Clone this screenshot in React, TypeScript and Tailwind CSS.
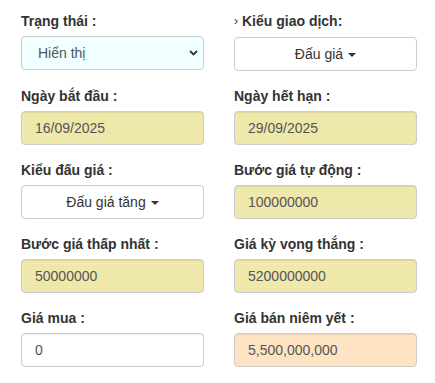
import React from "react";

const font = { fontFamily: '"Liberation Sans", Arial, sans-serif' };

function Label({ children }: { children: React.ReactNode }) {
  return (
    <label className="block mb-[5px] text-[14px] leading-5 font-bold text-[#333]">{children}</label>
  );
}

function Input({ value, bg }: { value: string; bg: string }) {
  return (
    <div
      className={`h-[34px] border border-[#ccc] rounded-[4px] pl-[13px] flex items-center text-[14px] text-[#555] shadow-[inset_0_1px_1px_rgba(0,0,0,0.075)] ${bg}`}
    >
      {value}
    </div>
  );
}

function Dropdown({ value }: { value: string }) {
  return (
    <div className="h-[34px] border border-[#ccc] rounded-[4px] bg-white flex items-center justify-center text-[14px] text-[#333]">
      <span>{value}</span>
      <span className="ml-[5px] inline-block w-0 h-0 border-t-[4px] border-t-[#333] border-x-[4px] border-x-transparent translate-y-[1px]" />
    </div>
  );
}

function Cell({ children }: { children: React.ReactNode }) {
  return <div className="px-[15px] mb-[15px]">{children}</div>;
}

export default function App() {
  return (
    <div style={font} className="bg-white w-[435px] h-[383px] pt-[11px] pl-[6px]">
      <div className="grid grid-cols-[213px_213px]">
        <Cell>
          <Label>Trạng thái :</Label>
          <div className="h-[34px] border border-[#ccc] rounded-[4px] bg-[#f0ffff] pl-[16px] pr-[5px] flex items-center justify-between text-[14px] text-[#555]">
            <span>Hiển thị</span>
            <svg width="9" height="6" viewBox="0 0 9 6">
              <path d="M1 1 L4.5 4.5 L8 1" stroke="#333" strokeWidth="1.8" fill="none" />
            </svg>
          </div>
        </Cell>
        <Cell>
          <Label>
            <span className="font-normal text-[12px] mr-[4px] relative -top-[1px]">›</span>Kiểu giao dịch:
          </Label>
          <Dropdown value="Đấu giá" />
        </Cell>
        <Cell>
          <Label>Ngày bắt đầu :</Label>
          <Input value="16/09/2025" bg="bg-[#eee8aa]" />
        </Cell>
        <Cell>
          <Label>Ngày hết hạn :</Label>
          <Input value="29/09/2025" bg="bg-[#eee8aa]" />
        </Cell>
        <Cell>
          <Label>Kiểu đấu giá :</Label>
          <Dropdown value="Đấu giá tăng" />
        </Cell>
        <Cell>
          <Label>Bước giá tự động :</Label>
          <Input value="100000000" bg="bg-[#eee8aa]" />
        </Cell>
        <Cell>
          <Label>Bước giá thấp nhất :</Label>
          <Input value="50000000" bg="bg-[#eee8aa]" />
        </Cell>
        <Cell>
          <Label>Giá kỳ vọng thắng :</Label>
          <Input value="5200000000" bg="bg-[#eee8aa]" />
        </Cell>
        <Cell>
          <Label>Giá mua :</Label>
          <Input value="0" bg="bg-white" />
        </Cell>
        <Cell>
          <Label>Giá bán niêm yết :</Label>
          <Input value="5,500,000,000" bg="bg-[#ffe4c4]" />
        </Cell>
      </div>
    </div>
  );
}
